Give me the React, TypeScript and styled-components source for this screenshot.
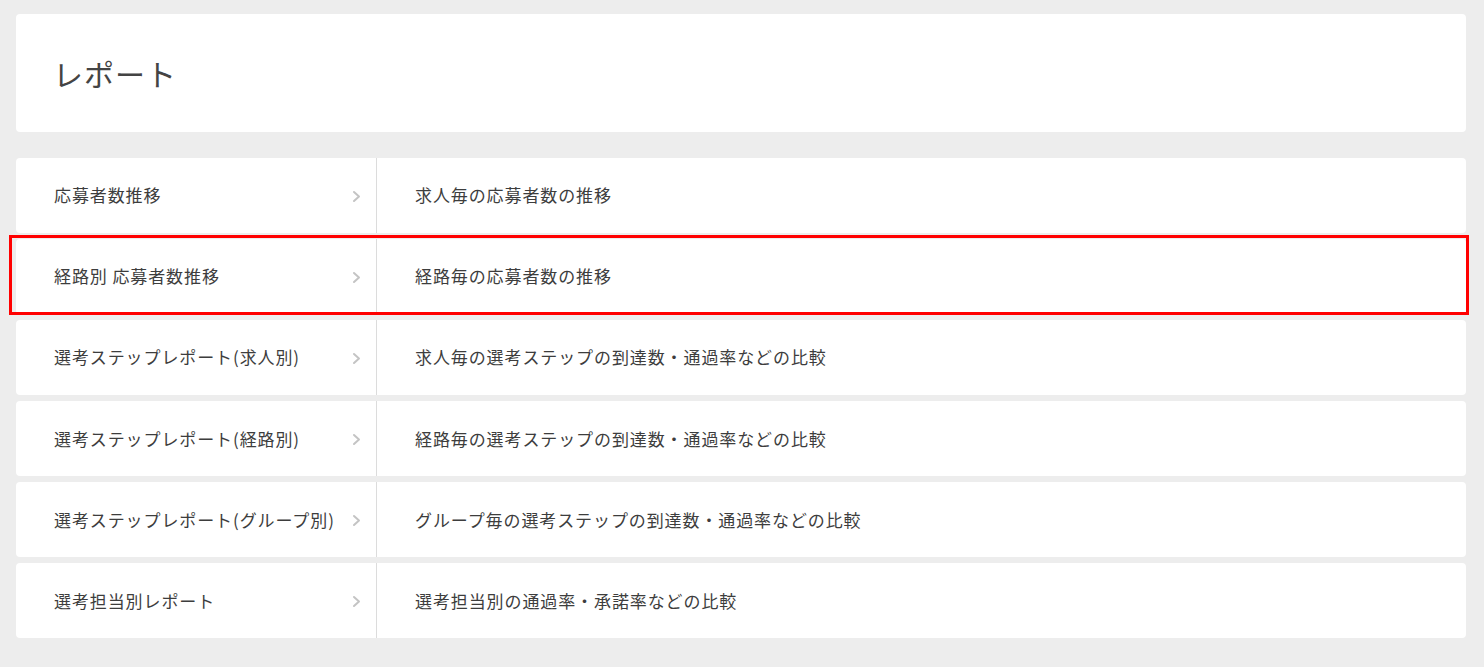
import React from "react";
import styled, { createGlobalStyle } from "styled-components";

interface Report {
  id: number;
  name: string;
  description: string;
  highlighted?: boolean;
}

const reports: Report[] = [
  { id: 1, name: "応募者数推移", description: "求人毎の応募者数の推移" },
  {
    id: 2,
    name: "経路別 応募者数推移",
    description: "経路毎の応募者数の推移",
    highlighted: true,
  },
  {
    id: 3,
    name: "選考ステップレポート(求人別)",
    description: "求人毎の選考ステップの到達数・通過率などの比較",
  },
  {
    id: 4,
    name: "選考ステップレポート(経路別)",
    description: "経路毎の選考ステップの到達数・通過率などの比較",
  },
  {
    id: 5,
    name: "選考ステップレポート(グループ別)",
    description: "グループ毎の選考ステップの到達数・通過率などの比較",
  },
  {
    id: 6,
    name: "選考担当別レポート",
    description: "選考担当別の通過率・承諾率などの比較",
  },
];

const GlobalStyle = createGlobalStyle`
  html, body {
    margin: 0;
    padding: 0;
    background-color: #ededed;
    font-family: "Noto Sans CJK JP", "Noto Sans", sans-serif;
    color: #3d3d3d;
  }
`;

const Chevron = () => (
  <svg width="9" height="13" viewBox="0 0 9 13" fill="none">
    <polyline
      points="2,2 7,6.5 2,11"
      stroke="#c4c4c4"
      strokeWidth="2"
      strokeLinecap="round"
      strokeLinejoin="round"
    />
  </svg>
);

const App: React.FC = () => {
  return (
    <Page>
      <GlobalStyle />
      <HeaderCard>
        <Title>レポート</Title>
      </HeaderCard>
      <ReportList>
        {reports.map((report) => (
          <ReportRow key={report.id} $highlighted={report.highlighted}>
            <NameCell>
              <span>{report.name}</span>
              <Chevron />
            </NameCell>
            <DescriptionCell>{report.description}</DescriptionCell>
          </ReportRow>
        ))}
      </ReportList>
    </Page>
  );
};

const Page = styled.div`
  padding: 14px 18px 28px 16px;
  min-height: 667px;
  box-sizing: border-box;
`;

const HeaderCard = styled.div`
  background-color: white;
  border-radius: 4px;
  height: 118px;
  display: flex;
  align-items: center;
  padding: 0 37px;
  margin-bottom: 26px;
`;

const Title = styled.h1`
  margin: 0;
  font-size: 30px;
  font-weight: 400;
  color: #444;
  letter-spacing: 1px;
`;

const ReportList = styled.div`
  display: flex;
  flex-direction: column;
  gap: 6.6px;
`;

const ReportRow = styled.div<{ $highlighted?: boolean }>`
  position: relative;
  display: grid;
  grid-template-columns: 361px 1fr;
  height: 74.5px;
  background-color: white;
  border-radius: 4px;
  font-size: 17px;
  letter-spacing: 0.9px;
  cursor: pointer;
  &::after {
    content: "";
    display: ${(p) => (p.$highlighted ? "block" : "none")};
    position: absolute;
    top: -4px;
    bottom: -1px;
    left: -7px;
    right: -3px;
    border: 3px solid #ff0000;
    pointer-events: none;
  }
`;

const NameCell = styled.div`
  display: flex;
  align-items: center;
  justify-content: space-between;
  padding: 0 15px 1px 38px;
  border-right: 1px solid #dcdcdc;
  color: #3d3d3d;
  white-space: nowrap;
  svg {
    margin-top: 3px;
    flex-shrink: 0;
  }
`;

const DescriptionCell = styled.div`
  display: flex;
  align-items: center;
  padding-left: 38px;
  padding-bottom: 1px;
  color: #3d3d3d;
`;

export default App;
